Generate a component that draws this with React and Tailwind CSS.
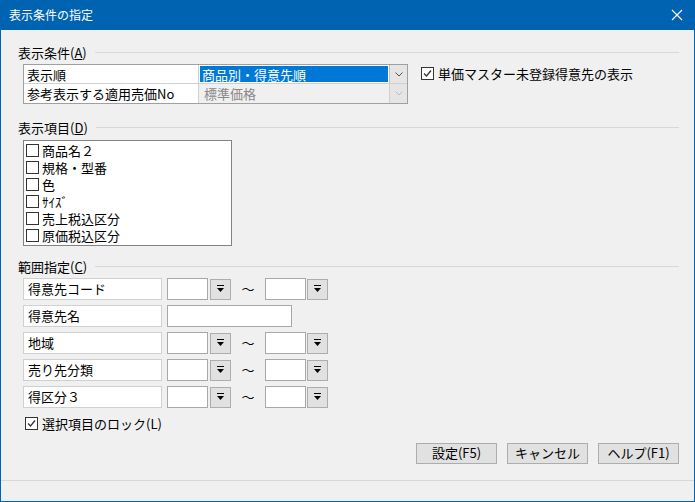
const F = { fontFamily: '"Noto Sans CJK JP", sans-serif' };

function Chk({ checked }) {
  return (
    <span className="inline-flex w-[13px] h-[13px] border border-[#333] bg-white items-center justify-center shrink-0">
      {checked && (
        <svg width="9" height="9" viewBox="0 0 9 9"><path d="M1 4.5 L3.5 7 L8 1.5" stroke="#333" strokeWidth="1.3" fill="none" /></svg>
      )}
    </span>
  );
}

function Section({ title, u }) {
  return (
    <div className="flex items-center gap-2 h-[18px]">
      <span className="text-[13px] leading-none">{title}(<span className="underline">{u}</span>)</span>
      <div className="flex-1 h-px bg-[#d8d8d8]" />
    </div>
  );
}

function Btn() {
  return (
    <div className="w-[21px] h-[21px] bg-[#e1e1e1] border border-[#adadad] flex items-center justify-center">
      <svg width="9" height="8" viewBox="0 0 9 8"><path d="M1 0.5h7" stroke="#000" /><path d="M1 3h7L4.5 7z" fill="#000" /></svg>
    </div>
  );
}

function RangeRow({ label, single }) {
  return (
    <div className="flex items-center h-[22px]">
      <div className="w-[139px] h-[22px] bg-white border border-[#d0d0d0] flex items-center pl-[4px] text-[13px]">{label}</div>
      {single ? (
        <div className="ml-[5px] w-[125px] h-[22px] bg-white border border-[#a8a8a8]" />
      ) : (
        <>
          <div className="ml-[5px] w-[41px] h-[22px] bg-white border border-[#a8a8a8]" />
          <div className="ml-[2px]"><Btn /></div>
          <div className="w-[34px] text-center text-[13px]">〜</div>
          <div className="w-[41px] h-[22px] bg-white border border-[#a8a8a8]" />
          <div className="ml-[1px]"><Btn /></div>
        </>
      )}
    </div>
  );
}

export default function App() {
  const items = ['商品名２', '規格・型番', '色', 'ｻｲｽﾞ', '売上税込区分', '原価税込区分'];
  return (
    <div style={F} className="w-[695px] h-[502px] bg-[#0063b1] flex flex-col text-[#000]">
      <div className="h-[30px] flex items-center justify-between pl-[9px] pr-[12px] text-white text-[12px]">
        <span>表示条件の指定</span>
        <svg width="12" height="12" viewBox="0 0 12 12"><path d="M1 1L11 11M11 1L1 11" stroke="white" strokeWidth="1.2" /></svg>
      </div>
      <div className="flex-1 mx-px mb-px bg-[#f0f0f0] flex flex-col">
        <div className="flex-1 pl-[17px] pr-[15px] pt-[13px]">
          <Section title="表示条件" u="A" />
          <div className="flex mt-[3px]">
            <div className="ml-[5px] w-[385px] border border-[#a0a0a0] bg-[#f0f0f0]">
              <div className="flex h-[19px] border-b border-[#d0d0d0]">
                <div className="w-[175px] bg-white border-r border-[#d0d0d0] pl-[3px] text-[13px] leading-[19px]">表示順</div>
                <div className="flex-1 bg-white flex p-[1px]">
                  <div className="flex-1 bg-[#0078d7] text-white text-[13px] leading-[17px] pl-[2px]">商品別・得意先順</div>
                </div>
                <div className="w-[18px] bg-[#e5e5e5] border-l border-[#c0c0c0] flex items-center justify-center">
                  <svg width="8" height="5" viewBox="0 0 8 5"><path d="M0.5 0.5L4 4L7.5 0.5" stroke="#555" fill="none" /></svg>
                </div>
              </div>
              <div className="flex h-[19px]">
                <div className="w-[175px] bg-white border-r border-[#d0d0d0] pl-[3px] text-[13px] leading-[19px]">参考表示する適用売価No</div>
                <div className="flex-1 pl-[5px] text-[13px] leading-[19px] text-[#888]">標準価格</div>
                <div className="w-[18px] bg-[#e5e5e5] border-l border-[#d0d0d0] flex items-center justify-center">
                  <svg width="8" height="5" viewBox="0 0 8 5"><path d="M0.5 0.5L4 4L7.5 0.5" stroke="#bbb" fill="none" /></svg>
                </div>
              </div>
            </div>
            <div className="ml-[13px] flex items-center gap-[4px] h-[19px] text-[13px]">
              <Chk checked />
              <span>単価マスター未登録得意先の表示</span>
            </div>
          </div>
          <div className="mt-[14px]"><Section title="表示項目" u="D" /></div>
          <div className="ml-[5px] mt-[4px] w-[209px] h-[106px] bg-white border border-[#828282] pt-[1px] pl-[2px]">
            {items.map((t) => (
              <div key={t} className="flex items-center gap-[3px] h-[17px] leading-[17px] text-[13px]">
                <Chk />
                <span className="leading-[17px]">{t}</span>
              </div>
            ))}
          </div>
          <div className="mt-[11px]"><Section title="範囲指定" u="C" /></div>
          <div className="ml-[5px] mt-[3px] flex flex-col gap-[5px]">
            <RangeRow label="得意先コード" />
            <RangeRow label="得意先名" single />
            <RangeRow label="地域" />
            <RangeRow label="売り先分類" />
            <RangeRow label="得区分３" />
          </div>
          <div className="ml-[7px] mt-[6px] flex items-center gap-[4px] text-[13px]">
            <Chk checked />
            <span>選択項目のロック(L)</span>
          </div>
          <div className="flex justify-end gap-[10px] mt-[9px] text-[13px]">
            {['設定(F5)', 'キャンセル', 'ヘルプ(F1)'].map((t) => (
              <div key={t} className="w-[81px] h-[21px] bg-[#e1e1e1] border border-[#adadad] flex items-center justify-center">{t}</div>
            ))}
          </div>
        </div>
        <div className="h-px bg-[#d8d8d8] mb-[20px]" />
      </div>
    </div>
  );
}
